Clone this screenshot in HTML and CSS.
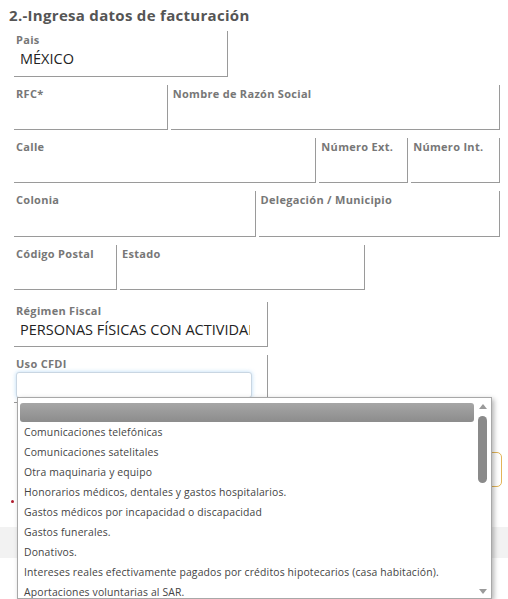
FILE: index.html
```html
<!DOCTYPE html>
<html lang="es">
<head>
<meta charset="utf-8">
<title>Facturación</title>
<link rel="stylesheet" href="styles.css">
</head>
<body>
<div class="page">
  <h2 class="title">2.-Ingresa datos de facturación</h2>
  <div class="form">
    <div class="row row-first">
      <div class="field tall w-pais"><label>Pais</label><div class="value">MÉXICO</div></div>
    </div>
    <div class="row">
      <div class="field w-rfc"><label>RFC*</label></div>
      <div class="field w-nombre"><label>Nombre de Razón Social</label></div>
    </div>
    <div class="row">
      <div class="field w-calle"><label>Calle</label></div>
      <div class="field w-num"><label>Número Ext.</label></div>
      <div class="field w-num"><label>Número Int.</label></div>
    </div>
    <div class="row">
      <div class="field tall w-half"><label>Colonia</label></div>
      <div class="field tall w-half"><label>Delegación / Municipio</label></div>
    </div>
    <div class="row">
      <div class="field w-cp"><label>Código Postal</label></div>
      <div class="field w-estado"><label>Estado</label></div>
    </div>
    <div class="row row-regimen">
      <div class="field w-regimen"><label>Régimen Fiscal</label><div class="value clip">PERSONAS FÍSICAS CON ACTIVIDADES EMPRESARIALES</div></div>
    </div>
    <div class="row">
      <div class="field w-regimen field-uso"><label>Uso CFDI</label><div class="select-box"></div></div>
    </div>
    <div class="actions">
      <button class="btn-outline" type="button">Facturar</button>
    </div>
    <div class="note"><span class="dot"></span></div>
  </div>
  <div class="band"></div>

  <div class="dropdown">
    <div class="dd-list">
      <div class="dd-selected"></div>
      <div class="dd-item">Comunicaciones telefónicas</div>
      <div class="dd-item">Comunicaciones satelitales</div>
      <div class="dd-item">Otra maquinaria y equipo</div>
      <div class="dd-item">Honorarios médicos, dentales y gastos hospitalarios.</div>
      <div class="dd-item">Gastos médicos por incapacidad o discapacidad</div>
      <div class="dd-item">Gastos funerales.</div>
      <div class="dd-item">Donativos.</div>
      <div class="dd-item">Intereses reales efectivamente pagados por créditos hipotecarios (casa habitación).</div>
      <div class="dd-item">Aportaciones voluntarias al SAR.</div>
    </div>
    <div class="dd-scroll">
      <span class="arrow-up"></span>
      <span class="thumb"></span>
      <span class="track"></span>
      <span class="arrow-down"></span>
    </div>
  </div>
</div>
</body>
</html>
```

FILE: styles.css
```css
html, body {
  margin: 0;
  padding: 0;
  height: 599px;
  overflow: hidden;
  background: #fff;
}
body {
  font-family: "Open Sans", "DejaVu Sans", sans-serif;
}
.page {
  position: relative;
  height: 599px;
}
.title {
  margin: 0;
  padding: 5px 0 0 9px;
  height: 21px;
  font-size: 15px;
  letter-spacing: 0.3px;
  font-weight: 700;
  color: #555;
  line-height: 20px;
}
.form {
  padding: 0 0 0 14px;
  width: 486px;
}
.row {
  display: flex;
  gap: 3px;
  margin-top: 8px;
}
.row-first {
  margin-top: 5px;
}
.row-regimen {
  margin-top: 12px;
}
.field {
  box-sizing: border-box;
  height: 45px;
  border-right: 1px solid #9a9a9a;
  border-bottom: 1px solid #9a9a9a;
  padding: 2px 0 0 2px;
}
.field.tall {
  height: 46px;
}
.field label {
  display: block;
  font-size: 11px;
  letter-spacing: 0.3px;
  font-weight: 700;
  color: #777;
  line-height: 14px;
}
.field .value {
  padding: 3px 0 0 4px;
  font-size: 14.5px;
  color: #222;
  line-height: 18px;
  white-space: nowrap;
}
.clip {
  overflow: hidden;
  width: 230px;
}
.w-pais { width: 214px; }
.w-rfc { width: 154px; }
.w-nombre { width: 330px; }
.w-calle { width: 303px; }
.w-num { width: 89px; }
.w-half { width: 242px; }
.w-cp { width: 103px; }
.w-estado { width: 245px; }
.w-regimen { width: 254px; }
.field-uso {
  height: 48px;
}
.select-box {
  box-sizing: border-box;
  margin-top: 1px;
  width: 236px;
  height: 26px;
  border: 1px solid #c9d6e2;
  border-radius: 3px;
  box-shadow: 0 0 4px rgba(102, 175, 233, 0.45);
  background: #fff;
}
.actions {
  display: flex;
  justify-content: flex-end;
  margin-top: 49px;
  margin-right: -2px;
}
.btn-outline {
  box-sizing: border-box;
  width: 160px;
  height: 35px;
  border: 1px solid #e3b558;
  border-radius: 5px;
  background: #fff;
  color: #e3a13a;
  font-family: inherit;
  font-size: 12px;
}
.note {
  height: 3px;
  padding: 13px 0 0 0;
  margin-left: -3px;
}
.dot {
  display: block;
  width: 3px;
  height: 3px;
  border-radius: 50%;
  background: #b01c2e;
}
.band {
  margin-top: 24px;
  height: 31px;
  background: #f2f2f2;
}

/* Open dropdown of Uso CFDI */
.dropdown {
  position: absolute;
  left: 17px;
  top: 397px;
  width: 475px;
  height: 202px;
  box-sizing: border-box;
  border: 1px solid #a8a8a8;
  background: #fff;
  box-shadow: 2px 2px 5px rgba(0, 0, 0, 0.3);
  display: flex;
  overflow: hidden;
}
.dd-list {
  flex: 1;
  padding: 5px 0 0 2px;
  overflow: hidden;
}
.dd-selected {
  height: 19px;
  border-radius: 3px;
  background: linear-gradient(#a6a6a6, #8c8c8c);
}
.dd-item {
  height: 20px;
  line-height: 20px;
  padding-left: 4px;
  font-size: 10.4px;
  letter-spacing: 0.15px;
  color: #444;
  white-space: nowrap;
}
.dd-scroll {
  width: 17px;
  display: flex;
  flex-direction: column;
  align-items: center;
  padding: 6px 0 4px;
  box-sizing: border-box;
}
.arrow-up, .arrow-down {
  width: 0;
  height: 0;
  border-left: 4px solid transparent;
  border-right: 4px solid transparent;
}
.arrow-up {
  border-bottom: 5px solid #9a9a9a;
}
.arrow-down {
  border-top: 5px solid #9a9a9a;
}
.thumb {
  margin-top: 7px;
  width: 9px;
  height: 67px;
  border-radius: 5px;
  background: #8a8a8a;
}
.track {
  flex: 1;
}
```
